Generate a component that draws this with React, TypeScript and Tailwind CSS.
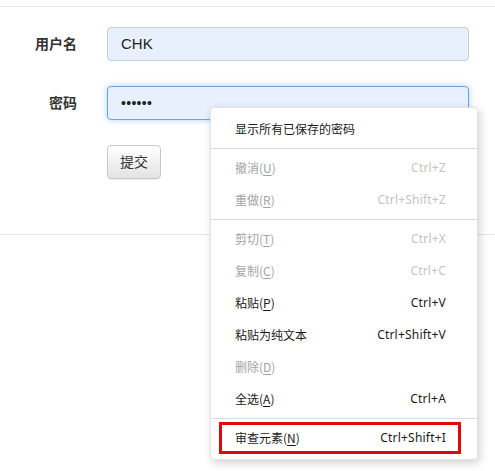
import type { ReactNode } from "react"

type Item = { label: string; key?: string; shortcut?: string; disabled?: boolean }

const groups: Item[][] = [
  [{ label: "显示所有已保存的密码" }],
  [
    { label: "撤消", key: "U", shortcut: "Ctrl+Z", disabled: true },
    { label: "重做", key: "R", shortcut: "Ctrl+Shift+Z", disabled: true },
  ],
  [
    { label: "剪切", key: "T", shortcut: "Ctrl+X", disabled: true },
    { label: "复制", key: "C", shortcut: "Ctrl+C", disabled: true },
    { label: "粘贴", key: "P", shortcut: "Ctrl+V" },
    { label: "粘贴为纯文本", shortcut: "Ctrl+Shift+V" },
    { label: "删除", key: "D", disabled: true },
    { label: "全选", key: "A", shortcut: "Ctrl+A" },
  ],
]

function Label({ item }: { item: Item }) {
  return (
    <span>
      {item.label}
      {item.key && (
        <>
          (<span className="underline underline-offset-2">{item.key}</span>)
        </>
      )}
    </span>
  )
}

function MenuRow({ item }: { item: Item }) {
  return (
    <div
      className={`h-8 flex items-center justify-between pl-6 pr-[31px] ${
        item.disabled ? "text-[#a3a3a3]" : "text-[#1a1a1a]"
      }`}
    >
      <Label item={item} />
      {item.shortcut && (
        <span className={`font-['Noto_Sans',sans-serif] tracking-[0.2px] ${item.disabled ? "text-[#c4c4c4]" : "text-[#1a1a1a]"}`}>
          {item.shortcut}
        </span>
      )}
    </div>
  )
}

function Field({ label, children }: { label: string; children: ReactNode }) {
  return (
    <div className="flex items-center gap-[30px]">
      <label className="w-[77px] text-right text-[14px] font-bold text-[#333]">{label}</label>
      {children}
    </div>
  )
}

export default function App() {
  return (
    <div className="relative w-[495px] h-[471px] bg-white overflow-hidden font-['Liberation_Sans','Noto_Sans_CJK_SC',sans-serif]">
      <div className="pt-[6px]">
        <div className="border-t border-[#ebebeb]">
          <div className="flex flex-col gap-[25px] pt-[20px] pb-[55px]">
            <Field label="用户名">
              <div className="w-[362px] h-[34px] flex items-center px-[13px] rounded border border-[#c9cdd4] bg-[#e8f0fe] text-[15px] text-[#222]">
                CHK
              </div>
            </Field>
            <Field label="密码">
              <div className="w-[362px] h-[34px] flex items-center px-[13px] rounded border border-[#6fa2d8] bg-[#e8f0fe] shadow-[0_0_6px_rgba(102,175,233,0.55)] text-[14px] tracking-[0.3px] text-[#222]">
                ••••••
              </div>
            </Field>
            <div className="pl-[107px]">
              <button className="w-[54px] h-[34px] rounded border border-[#c8c8c8] bg-gradient-to-b from-white to-[#e3e3e3] text-[14px] text-[#333] shadow-[0_1px_1px_rgba(0,0,0,0.08)]">
                提交
              </button>
            </div>
          </div>
          <div className="border-t border-[#e5e5e5]" />
        </div>
      </div>

      {/* context menu over the password field */}
      <div className="absolute left-[210px] top-[107px] w-[268px] py-[5px] rounded bg-white border border-[#e3e3e3] shadow-[2px_3px_8px_rgba(0,0,0,0.18)] text-[12px] font-['Noto_Sans_CJK_SC',sans-serif]">
        {groups.map((g, i) => (
          <div key={i}>
            {g.map((item) => (
              <MenuRow key={item.label} item={item} />
            ))}
            <div className="py-[3px]">
              <div className="border-t border-[#dcdcdc]" />
            </div>
          </div>
        ))}
        <div className="h-8 flex items-stretch pl-2 pr-4">
          <div className="flex-1 flex items-center justify-between border-[3px] border-[#dc0a0a] pl-[13px] pr-[12px] text-[#1a1a1a]">
            <span>
              审查元素(<span className="underline underline-offset-2">N</span>)
            </span>
            <span className="font-['Noto_Sans',sans-serif] tracking-[0.2px]">Ctrl+Shift+I</span>
          </div>
        </div>
      </div>
    </div>
  )
}
